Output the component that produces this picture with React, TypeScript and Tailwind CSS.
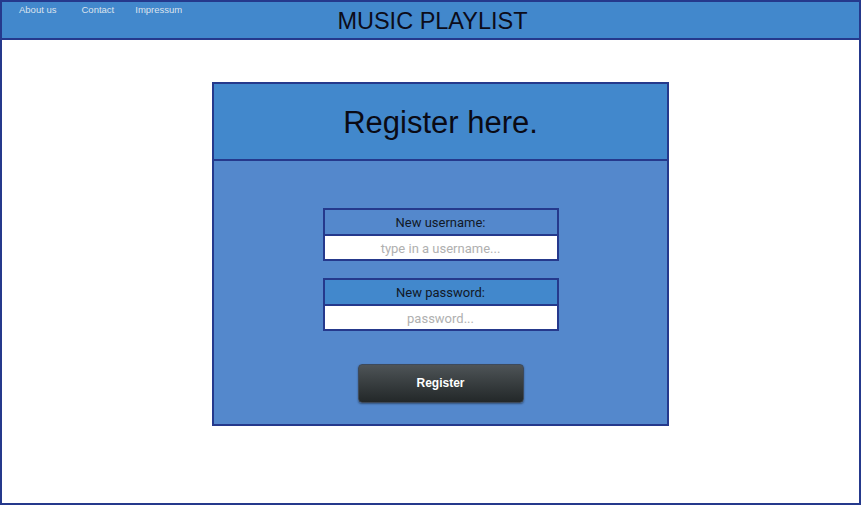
import React from "react";

export default function App() {
  return (
    <div className="w-[862px] h-[506px] bg-white" style={{ fontFamily: '"Liberation Sans", Arial, sans-serif' }}>
      <div className="w-[861px] h-[505px] border-2 border-[#25398c] flex flex-col">
        <header className="relative h-[38px] bg-[#4288cc] border-b-2 border-[#25398c] flex justify-center">
          <nav className="absolute left-[17px] top-[1px] flex text-[9.5px] text-[#dbe3ee]">
            <span>About us</span>
            <span className="ml-[25px]">Contact</span>
            <span className="ml-[21px]">Impressum</span>
          </nav>
          <h1 className="text-[23.5px] leading-none mt-[8px] ml-[4px] text-[#0c0c1a]">MUSIC PLAYLIST</h1>
        </header>
        <main className="flex-1 flex justify-center pt-[42px] pl-[20px]">
          <div className="w-[457px] h-[344px] border-2 border-[#25398c] bg-[#5488cc] flex flex-col">
            <div className="h-[77px] bg-[#4288cc] border-b-2 border-[#25398c] flex items-center justify-center">
              <h2 className="text-[31px] leading-none text-[#0a0a14] mt-[1px]">Register here.</h2>
            </div>
            <div className="flex flex-col items-center pt-[47px]">
              <div className="w-[236px] border-2 border-[#25398c]">
                <div className="h-[26px] bg-[#5488cc] border-b-2 border-[#25398c] flex items-center justify-center text-[13px] text-[#111827] pt-[1px]" style={{ fontFamily: 'Roboto, sans-serif' }}>New username:</div>
                <div className="h-[23px] bg-white flex items-center justify-center text-[13px] text-[#b0b0b0] pt-[2px]" style={{ fontFamily: 'Roboto, sans-serif' }}>type in a username...</div>
              </div>
              <div className="w-[236px] border-2 border-[#25398c] mt-[17px]">
                <div className="h-[26px] bg-[#4288cc] border-b-2 border-[#25398c] flex items-center justify-center text-[13px] text-[#111827] pt-[1px]" style={{ fontFamily: 'Roboto, sans-serif' }}>New password:</div>
                <div className="h-[23px] bg-white flex items-center justify-center text-[13px] text-[#b0b0b0] pt-[2px]" style={{ fontFamily: 'Roboto, sans-serif' }}>password...</div>
              </div>
              <button className="mt-[33px] w-[166px] h-[39px] rounded-[4px] border border-[#3d4a5c] bg-gradient-to-b from-[#4e5457] to-[#232829] text-white font-bold text-[12px] pb-[2px] shadow-[0_1px_2px_rgba(0,0,0,0.4)]">
                Register
              </button>
            </div>
          </div>
        </main>
      </div>
    </div>
  );
}
